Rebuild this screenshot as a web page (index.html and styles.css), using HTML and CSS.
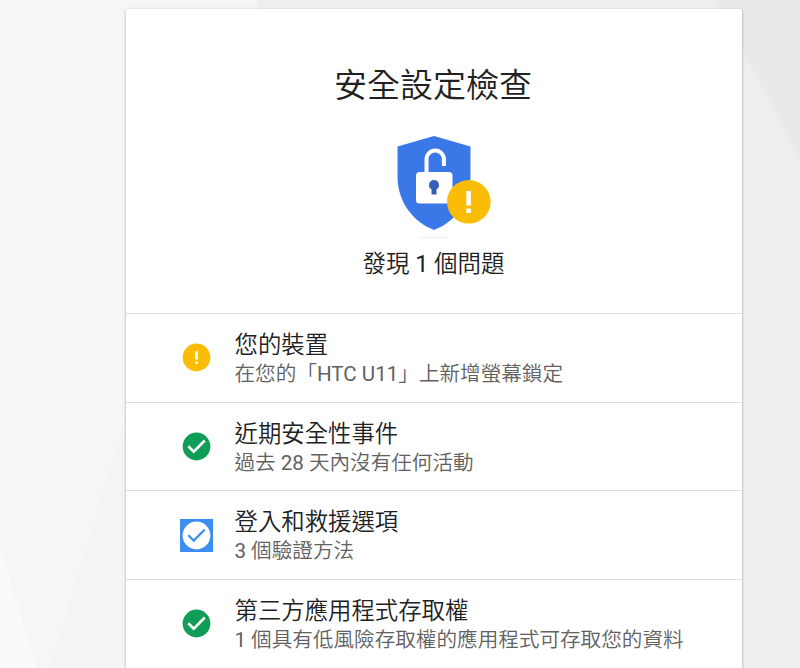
FILE: index.html
```html
<!DOCTYPE html>
<html lang="zh-Hant">
<head>
    <meta charset="UTF-8">
    <meta name="viewport" content="width=device-width, initial-scale=1.0">
    <title>安全設定檢查</title>
    <link rel="stylesheet" href="styles.css">
</head>
<body>

    <!-- Background shapes -->
    <svg class="backdrop" viewBox="0 0 800 668" preserveAspectRatio="none" aria-hidden="true">
        <polygon points="0,0 257,0 125,420 50,668 0,668" fill="#f6f6f6"/>
        <polygon points="257,0 800,0 800,668 260,668" fill="#eeeeee"/>
        <polygon points="717,0 800,0 800,160" fill="#e9e9eb"/>
        <polygon points="0,545 36,668 0,668" fill="#fafafc"/>
    </svg>

    <main class="card">
        <header class="summary">
            <h1 class="summary-title">安全設定檢查</h1>
            <svg class="shield" viewBox="0 0 96 104" aria-hidden="true">
                <ellipse cx="37" cy="102.500" rx="16" ry="1" fill="#f3f3f3"/>
                <path d="M37 1L73.500 11.500V41C73.500 67 58 87 37 95C16 87 .5 67 .5 41V11.500Z" fill="#3b78e7"/>
                <path d="M29.500 38V24.300a8.700 8.700 0 0 1 17.400 0V31" fill="none" stroke="#fff" stroke-width="4"/>
                <rect x="19" y="37" width="36.500" height="31.500" rx="3.500" fill="#fff"/>
                <path d="M37 45a5 5 0 0 1 2.500 9.300V59.500h-5V54.300A5 5 0 0 1 37 45Z" fill="#3460b8"/>
                <circle cx="71.800" cy="66.800" r="21.800" fill="#fbbc05"/>
                <path d="M69.300 56h4.600v14.500h-4.600zM69.300 73.500h4.600v4.500h-4.600z" fill="#fff"/>
            </svg>
            <p class="summary-text">發現 <span class="latin">1</span> 個問題</p>
        </header>

        <section class="item">
            <svg class="item-icon" viewBox="0 0 34 34" aria-hidden="true">
                <circle cx="17" cy="17" r="14.300" fill="#fbbc05"/>
                <path d="M15.600 10.500h2.800v8.500h-2.800zM15.600 21h2.800v2.700h-2.800z" fill="#fff"/>
            </svg>
            <div class="item-body">
                <h2 class="item-title">您的裝置</h2>
                <p class="item-text">在您的「<span class="latin">HTC U11</span>」上新增螢幕鎖定</p>
            </div>
        </section>

        <section class="item">
            <svg class="item-icon" viewBox="0 0 34 34" aria-hidden="true">
                <circle cx="17" cy="17" r="14.300" fill="#0f9d58"/>
                <path d="M8.500 16.800L14.200 22.300L25.500 10.800" fill="none" stroke="#fff" stroke-width="2.700"/>
            </svg>
            <div class="item-body">
                <h2 class="item-title">近期安全性事件</h2>
                <p class="item-text">過去 <span class="latin">28</span> 天內沒有任何活動</p>
            </div>
        </section>

        <section class="item">
            <svg class="item-icon selected" viewBox="0 0 34 34" aria-hidden="true">
                <circle cx="17" cy="17" r="14.300" fill="#fff"/>
                <path d="M8.500 16.800L14.200 22.300L25.500 10.800" fill="none" stroke="#3b8ef0" stroke-width="2.300"/>
            </svg>
            <div class="item-body">
                <h2 class="item-title">登入和救援選項</h2>
                <p class="item-text"><span class="latin">3</span> 個驗證方法</p>
            </div>
        </section>

        <section class="item">
            <svg class="item-icon" viewBox="0 0 34 34" aria-hidden="true">
                <circle cx="17" cy="17" r="14.300" fill="#0f9d58"/>
                <path d="M8.500 16.800L14.200 22.300L25.500 10.800" fill="none" stroke="#fff" stroke-width="2.700"/>
            </svg>
            <div class="item-body">
                <h2 class="item-title">第三方應用程式存取權</h2>
                <p class="item-text"><span class="latin">1</span> 個具有低風險存取權的應用程式可存取您的資料</p>
            </div>
        </section>
    </main>

</body>
</html>
```

FILE: styles.css
```css
* {
    box-sizing: border-box;
}

body {
    margin: 0;
    height: 668px;
    padding-top: 9px;
    overflow: hidden;
    background-color: #f4f4f4;
    font-family: Roboto, "Noto Sans CJK TC", sans-serif;
    font-weight: 350;
    color: #212121;
}

.backdrop {
    position: absolute;
    top: 0;
    left: 0;
    z-index: -1;
    width: 100%;
    height: 100%;
}

.latin {
    font-weight: 400;
}

.card {
    width: 616px;
    height: 659px;
    margin-left: 126px;
    background-color: #fff;
    border-radius: 2px 2px 0 0;
    box-shadow: 0 1px 3px rgba(0, 0, 0, 0.35);
}

.summary {
    display: flex;
    flex-direction: column;
    align-items: center;
    height: 304px;
    padding-top: 53px;
}

.summary-title {
    margin: 0 2px 0 0;
    font-size: 33px;
    font-weight: 350;
    line-height: 48px;
}

.shield {
    width: 96px;
    height: 104px;
    margin: 25px 0 0 21px;
}

.summary-text {
    margin: 7px 1px 0 0;
    font-size: 23.5px;
    line-height: 36px;
}

.item {
    display: flex;
    align-items: center;
    height: 88.7px;
    padding-left: 54px;
    border-top: 1px solid #dcdcdc;
}

.item-icon {
    width: 33px;
    height: 33px;
    margin-right: 21.5px;
}

.item-icon.selected {
    background-color: #3b8ef0;
}

.item-body {
    padding-top: 2px;
}

.item-title {
    margin: 0;
    font-size: 23.4px;
    font-weight: 350;
    line-height: 30px;
}

.item-text {
    margin: 0;
    font-size: 20.6px;
    line-height: 28px;
    color: #616161;
}
```
